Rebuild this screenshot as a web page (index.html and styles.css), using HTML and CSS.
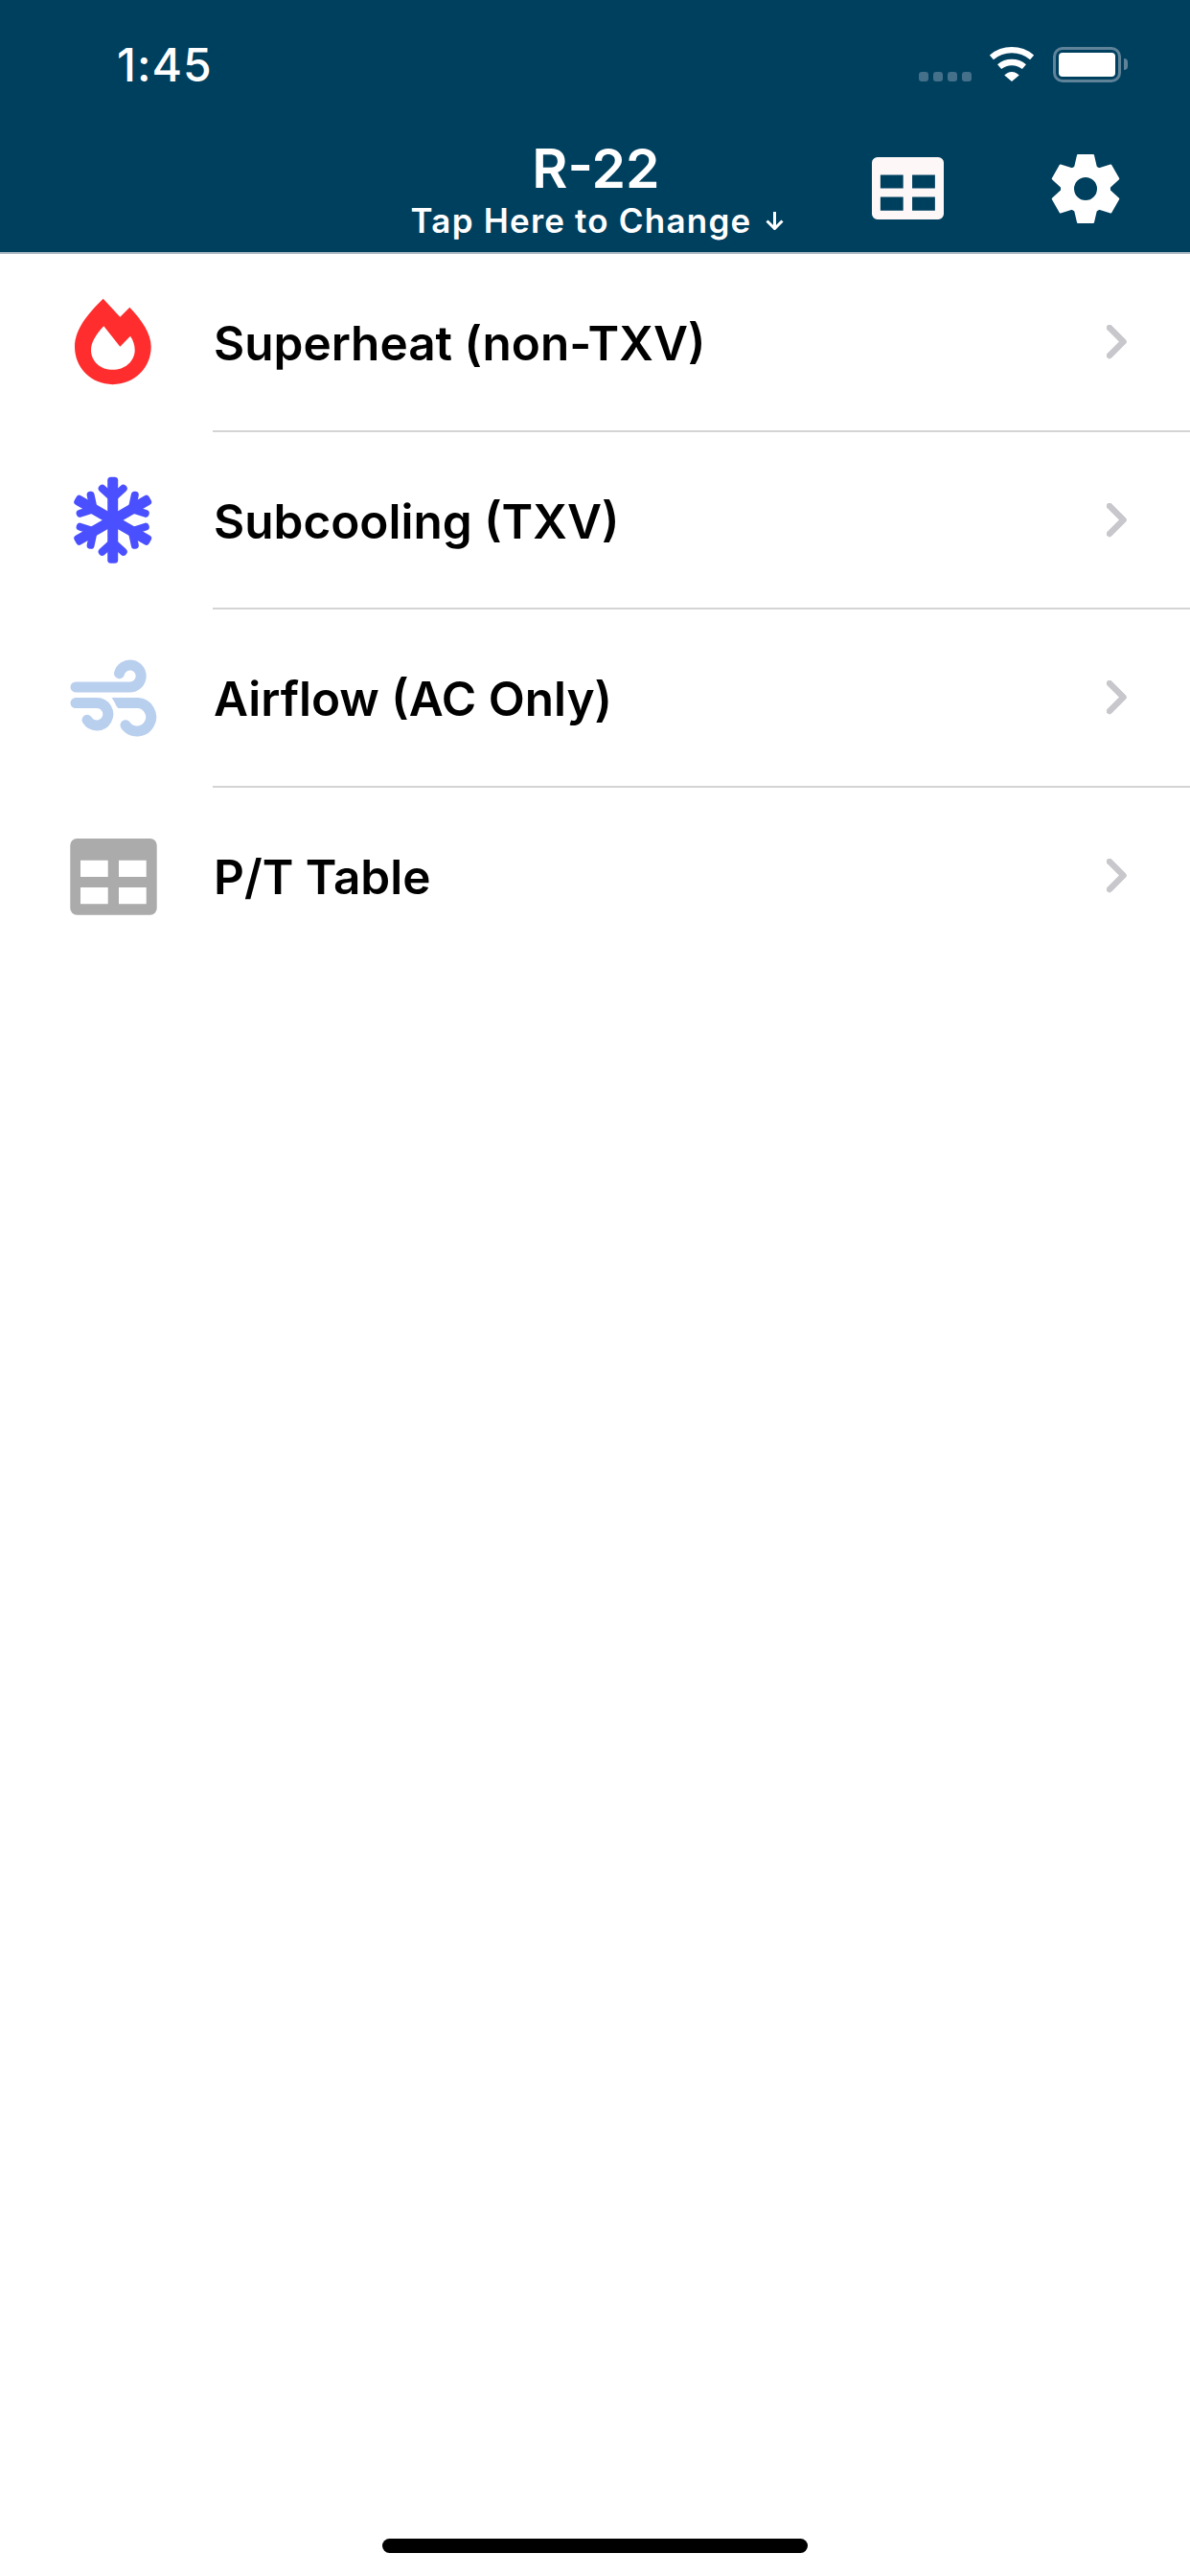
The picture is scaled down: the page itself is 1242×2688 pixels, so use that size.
FILE: index.html
```html
<!DOCTYPE html>
<html lang="en">
<head>
  <meta charset="UTF-8">
  <meta name="viewport" content="width=device-width, initial-scale=1.0">
  <title>R-22</title>
  <link rel="stylesheet" href="styles.css">
</head>
<body>
  <header class="header">
    <div class="status-bar">
      <span class="time">1:45</span>
      <div class="status-icons">
        <div class="signal"><i></i><i></i><i></i><i></i></div>
        <svg class="wifi" viewBox="0 0 46 36">
          <path d="M1.900 10.900A32.800 32.800 0 0 1 44.100 10.900"/>
          <path d="M10.100 20.700A20 20 0 0 1 35.900 20.700"/>
          <path class="wifi-dot" d="M23 36L15.300 29.600A10 10 0 0 1 30.700 29.600Z"/>
        </svg>
        <div class="battery"><div class="battery-level"></div></div>
        <div class="battery-nub"></div>
      </div>
    </div>
    <div class="nav-bar">
      <div class="nav-title">
        <div class="refrigerant">R-22</div>
        <div class="change">
          Tap Here to Change
          <svg class="arrow" viewBox="0 0 21 20"><path d="M10.500 1V18M2.500 10.500L10.500 18.500L18.500 10.500"/></svg>
        </div>
      </div>
      <svg class="nav-table" viewBox="23.300 25 90.400 79.700" preserveAspectRatio="none"><path fill-rule="evenodd" d="M30.300 25H106.700A7 7 0 0 1 113.700 32V97.700A7 7 0 0 1 106.700 104.700H30.300A7 7 0 0 1 23.300 97.700V32A7 7 0 0 1 30.300 25ZM34 47.700V65H62.700V47.700ZM74 47.700V65H102.700V47.700ZM34 76V93.300H62.700V76ZM74 76V93.300H102.700V76Z"/></svg>
      <svg class="nav-gear" viewBox="-37 -37 74 74">
        <circle class="gear-body" r="19"/>
        <path class="gear-tooth" d="M-8 -35H8L11 -22H-11Z"/>
        <path class="gear-tooth" transform="rotate(60)" d="M-8 -35H8L11 -22H-11Z"/>
        <path class="gear-tooth" transform="rotate(120)" d="M-8 -35H8L11 -22H-11Z"/>
        <path class="gear-tooth" transform="rotate(180)" d="M-8 -35H8L11 -22H-11Z"/>
        <path class="gear-tooth" transform="rotate(240)" d="M-8 -35H8L11 -22H-11Z"/>
        <path class="gear-tooth" transform="rotate(300)" d="M-8 -35H8L11 -22H-11Z"/>
      </svg>
    </div>
  </header>

  <div class="list">
    <div class="row">
      <svg class="row-icon" viewBox="0 2.850 130 130"><path class="flame" fill-rule="evenodd" d="M57.700 21.700L75.300 40.700L85.300 30.700C98 44 107.700 58 107.700 71.700C107.700 94 90 111 67.700 111C45.500 111 28 94 28 71.700C28 53 43 36 57.700 21.700ZM58.300 50C50 59 45 67 45 75C45 87 55 95.700 67.700 95.700C80 95.700 90.700 87 90.700 75C90.700 70 89 65 86 60.700L75.300 71.700Z"/></svg>
      <span class="row-label">Superheat (non-TXV)</span>
      <svg class="chevron" viewBox="0 0 24 38"><path d="M3 3L17.500 17.500L3 32"/></svg>
    </div>
    <div class="row">
      <svg class="row-icon" viewBox="0 -1.450 130 130">
        <g class="snow">
          <g transform="translate(67.700 62.300)">
            <rect x="-5.500" y="-45" width="11" height="90" rx="3.500"/>
            <path d="M-11 -33L0 -23L11 -33M-11 33L0 23L11 33"/>
          </g>
          <g transform="translate(67.700 62.300) rotate(60)">
            <rect x="-5.500" y="-45" width="11" height="90" rx="3.500"/>
            <path d="M-11 -33L0 -23L11 -33M-11 33L0 23L11 33"/>
          </g>
          <g transform="translate(67.700 62.300) rotate(120)">
            <rect x="-5.500" y="-45" width="11" height="90" rx="3.500"/>
            <path d="M-11 -33L0 -23L11 -33M-11 33L0 23L11 33"/>
          </g>
        </g>
      </svg>
      <span class="row-label">Subcooling (TXV)</span>
      <svg class="chevron" viewBox="0 0 24 38"><path d="M3 3L17.500 17.500L3 32"/></svg>
    </div>
    <div class="row">
      <svg class="row-icon" viewBox="0 -0.750 130 130">
        <path class="wind" d="M29 52.200H85.300A11.500 11.500 0 1 0 74.500 38M29 68.800H51A11.700 11.700 0 1 1 41 86.500M76 68.800H93.500A14.700 14.700 0 1 1 81 92"/>
        <polygon class="wind-fill" points="66.700,63.300 77,63.300 77,74.300 73.300,74.300"/>
      </svg>
      <span class="row-label">Airflow (AC Only)</span>
      <svg class="chevron" viewBox="0 0 24 38"><path d="M3 3L17.500 17.500L3 32"/></svg>
    </div>
    <div class="row">
      <svg class="row-icon table-icon" viewBox="0 0 130 130"><path fill-rule="evenodd" d="M30.300 25H106.700A7 7 0 0 1 113.700 32V97.700A7 7 0 0 1 106.700 104.700H30.300A7 7 0 0 1 23.300 97.700V32A7 7 0 0 1 30.300 25ZM34 47.700V65H62.700V47.700ZM74 47.700V65H102.700V47.700ZM34 76V93.300H62.700V76ZM74 76V93.300H102.700V76Z"/></svg>
      <span class="row-label">P/T Table</span>
      <svg class="chevron" viewBox="0 0 24 38"><path d="M3 3L17.500 17.500L3 32"/></svg>
    </div>
  </div>

  <div class="home-indicator"></div>
</body>
</html>
```

FILE: styles.css
```css
html, body { margin: 0; padding: 0; }
body { width: 1242px; height: 2688px; background: #fff; font-family: Inter, "Liberation Sans", sans-serif; position: relative; overflow: hidden; }

.header { background: #00405f; height: 263px; border-bottom: 2px solid #a9b8c1; color: #fff; display: flex; flex-direction: column; }
.status-bar { height: 132px; display: flex; justify-content: space-between; align-items: flex-start; padding: 42px 65px 0 122px; box-sizing: border-box; }
.time { font-size: 48px; font-weight: 500; line-height: 52px; letter-spacing: 1px; }
.status-icons { display: flex; align-items: flex-start; padding-top: 7px; }
.signal { display: flex; gap: 5px; margin-top: 26px; margin-right: 19px; }
.signal i { display: block; width: 10px; height: 10px; border-radius: 3px; background: #44708a; }
.wifi { width: 46px; height: 36px; margin-right: 20px; fill: none; stroke: #fff; }
.wifi path { stroke-width: 6.300; }
.wifi .wifi-dot { fill: #fff; stroke: none; }
.battery { width: 71px; height: 37px; border: 3px solid #5f8399; border-radius: 10px; box-sizing: border-box; padding: 3px; }
.battery-level { background: #fff; height: 100%; border-radius: 4px; }
.battery-nub { width: 4px; height: 12px; margin: 12px 0 0 3px; background: #5f8399; border-radius: 0 6px 6px 0; }

.nav-bar { flex: 1; position: relative; }
.nav-title { text-align: center; font-weight: 600; }
.refrigerant { font-size: 57px; line-height: 60px; margin-top: 14px; padding-left: 2px; }
.change { font-size: 35px; line-height: 42px; letter-spacing: 1.200px; margin-top: 3px; padding-left: 6px; }
.arrow { width: 21px; height: 20px; margin-left: 4px; vertical-align: 3px; fill: none; stroke: #fff; stroke-width: 3; }
.nav-table { position: absolute; left: 910px; top: 32px; width: 75px; height: 65px; fill: #fdf8f7; }
.nav-gear { position: absolute; left: 1096px; top: 28px; width: 74px; height: 74px; fill: #fff; }
.gear-body { fill: none; stroke: #fff; stroke-width: 14; }
.gear-tooth { stroke: #fff; stroke-width: 2; stroke-linejoin: round; }

.row { height: 185.700px; display: flex; align-items: center; padding-left: 50px; position: relative; }
.row::after { content: ""; position: absolute; left: 222px; right: 0; bottom: 0; height: 2px; background: #d4d4d4; }
.row:last-child::after { display: none; }
.row-icon { width: 130px; height: 130px; flex: none; margin-right: 43px; }
.row-label { font-size: 49.500px; font-weight: 600; color: #000; flex: 1; }
.chevron { width: 24px; height: 38px; margin-right: 63px; fill: none; stroke: #c7c7cc; stroke-width: 6.500; stroke-linecap: round; stroke-linejoin: round; }

.flame { fill: #ff2d2d; }
.snow { fill: #4a50ff; }
.snow path { fill: none; stroke: #4a50ff; stroke-width: 8; stroke-linecap: round; stroke-linejoin: round; }
.wind { fill: none; stroke: #b9cfee; stroke-width: 11; stroke-linecap: round; }
.wind-fill { fill: #b9cfee; }
.table-icon { fill: #ababab; }

.home-indicator { position: absolute; left: 399px; top: 2649px; width: 444px; height: 15px; background: #000; border-radius: 8px; }
```
